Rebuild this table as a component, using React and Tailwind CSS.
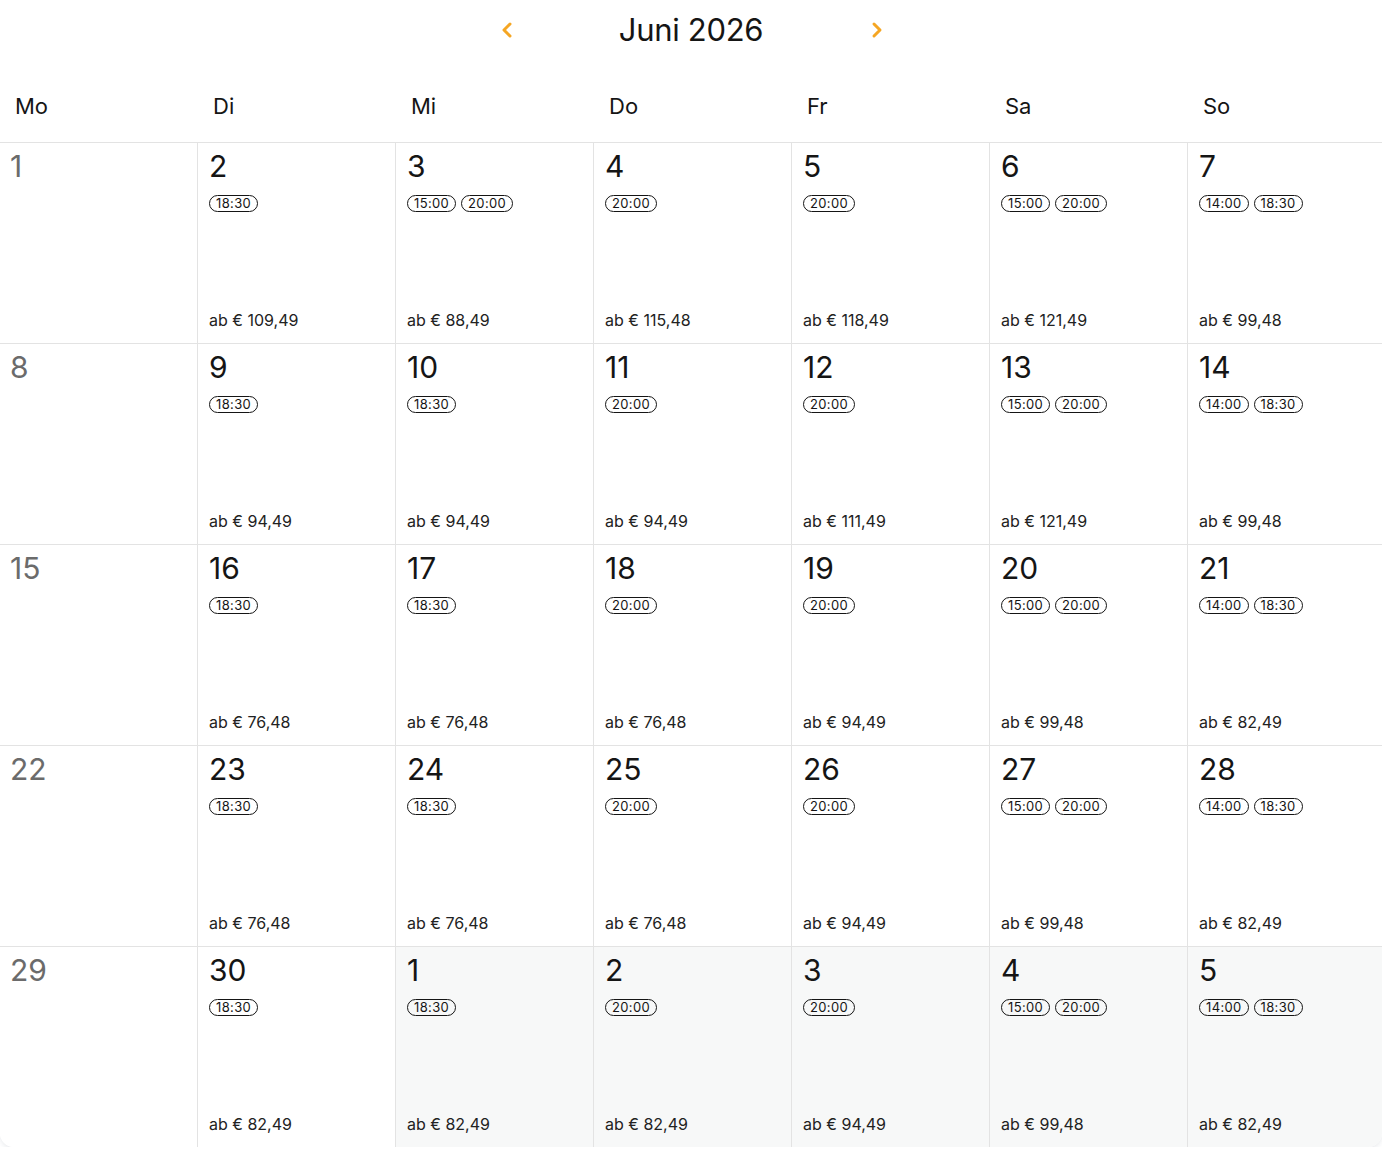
import React from "react";

const weeks = [
  [
    { d: 1, mon: true },
    { d: 2, t: ["18:30"], p: "109,49" },
    { d: 3, t: ["15:00", "20:00"], p: "88,49" },
    { d: 4, t: ["20:00"], p: "115,48" },
    { d: 5, t: ["20:00"], p: "118,49" },
    { d: 6, t: ["15:00", "20:00"], p: "121,49" },
    { d: 7, t: ["14:00", "18:30"], p: "99,48" },
  ],
  [
    { d: 8, mon: true },
    { d: 9, t: ["18:30"], p: "94,49" },
    { d: 10, t: ["18:30"], p: "94,49" },
    { d: 11, t: ["20:00"], p: "94,49" },
    { d: 12, t: ["20:00"], p: "111,49" },
    { d: 13, t: ["15:00", "20:00"], p: "121,49" },
    { d: 14, t: ["14:00", "18:30"], p: "99,48" },
  ],
  [
    { d: 15, mon: true },
    { d: 16, t: ["18:30"], p: "76,48" },
    { d: 17, t: ["18:30"], p: "76,48" },
    { d: 18, t: ["20:00"], p: "76,48" },
    { d: 19, t: ["20:00"], p: "94,49" },
    { d: 20, t: ["15:00", "20:00"], p: "99,48" },
    { d: 21, t: ["14:00", "18:30"], p: "82,49" },
  ],
  [
    { d: 22, mon: true },
    { d: 23, t: ["18:30"], p: "76,48" },
    { d: 24, t: ["18:30"], p: "76,48" },
    { d: 25, t: ["20:00"], p: "76,48" },
    { d: 26, t: ["20:00"], p: "94,49" },
    { d: 27, t: ["15:00", "20:00"], p: "99,48" },
    { d: 28, t: ["14:00", "18:30"], p: "82,49" },
  ],
  [
    { d: 29, mon: true },
    { d: 30, t: ["18:30"], p: "82,49" },
    { d: 1, t: ["18:30"], p: "82,49", next: true },
    { d: 2, t: ["20:00"], p: "82,49", next: true },
    { d: 3, t: ["20:00"], p: "94,49", next: true },
    { d: 4, t: ["15:00", "20:00"], p: "99,48", next: true },
    { d: 5, t: ["14:00", "18:30"], p: "82,49", next: true },
  ],
];

const days = ["Mo", "Di", "Mi", "Do", "Fr", "Sa", "So"];

function Chevron({ dir }) {
  return (
    <svg width="14" height="20" viewBox="0 0 14 20" fill="none">
      <path
        d={dir === "left" ? "M10 4 L4 10 L10 16" : "M4 4 L10 10 L4 16"}
        stroke="#f5a623"
        strokeWidth="3"
        strokeLinecap="round"
        strokeLinejoin="round"
      />
    </svg>
  );
}

function Cell({ c, col, last }) {
  return (
    <div
      className={
        "flex flex-col px-[10px] pt-[5px] pb-[11px] " +
        (last ? "h-[200px] " : "h-[201px] border-b border-[#e3e3e3] ") +
        (col > 0 ? "border-l border-[#e3e3e3] " : "") +
        (c.next ? "bg-[#f7f8f8]" : "bg-white")
      }
    >
      <div
        className={
          "text-[30px] leading-[36px] " + (c.mon ? "text-[#6b6b6b]" : "text-[#151515] pl-px")
        }
      >
        {c.d}
      </div>
      {c.t && (
        <div className="flex gap-[5px] mt-[11px] pl-px">
          {c.t.map((t, i) => (
            <span
              key={i}
              className="h-[17px] px-[6px] rounded-full border border-[#151515] text-[13px] leading-[15px] tracking-[0.35px] text-[#151515] flex items-center"
            >
              {t}
            </span>
          ))}
        </div>
      )}
      {c.p && (
        <div className="mt-auto text-[16px] leading-[24px] text-[#222] pl-px">ab € {c.p}</div>
      )}
    </div>
  );
}

export default function App() {
  return (
    <div className="w-[1382px] bg-white" style={{ fontFamily: "Inter, 'Noto Sans', sans-serif" }}>
      <div className="rounded-b-[14px] shadow-[0_2px_5px_rgba(40,60,90,0.10)] bg-white">
        <div className="h-[60px] flex items-center justify-center">
          <div className="w-[30px] flex justify-center pl-[2px]">
            <Chevron dir="left" />
          </div>
          <div className="w-[340px] text-center text-[31px] leading-[40px] tracking-[-0.3px] text-[#151515]">Juni 2026</div>
          <div className="w-[30px] flex justify-center pl-[2px]">
            <Chevron dir="right" />
          </div>
        </div>
        <div className="grid grid-cols-[197px_repeat(5,198px)_1fr] h-[83px] border-b border-[#e3e3e3]">
          {days.map((d, i) => (
            <div key={d} className={"pt-[31px] text-[22px] leading-[30px] text-[#151515] " + (i === 0 ? "pl-[15px]" : "pl-[16px]")}>
              {d}
            </div>
          ))}
        </div>
        <div className="grid grid-cols-[197px_repeat(5,198px)_1fr] rounded-b-[14px] overflow-hidden">
          {weeks.map((w, wi) =>
            w.map((c, ci) => <Cell key={wi + "-" + ci} c={c} col={ci} last={wi === weeks.length - 1} />)
          )}
        </div>
      </div>
    </div>
  );
}
